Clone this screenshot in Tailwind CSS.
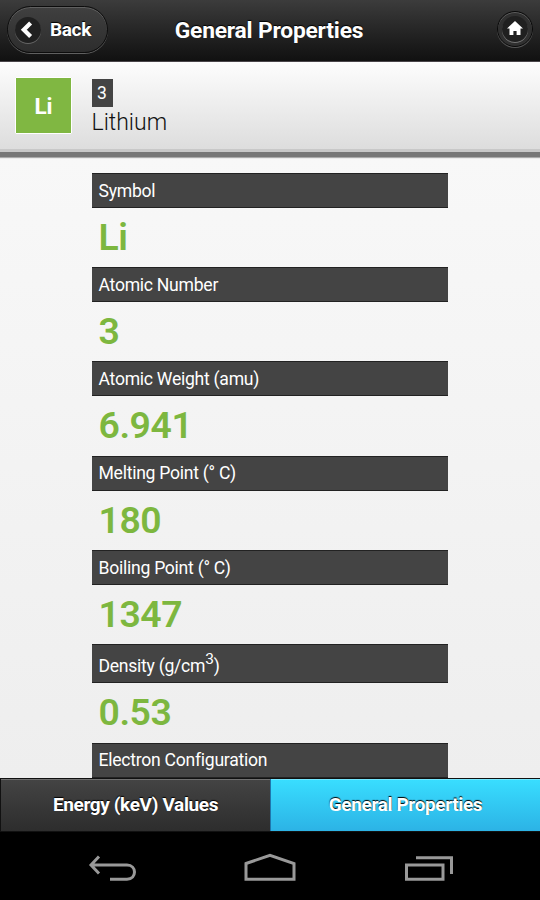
<!DOCTYPE html>
<html lang="en">
<head>
  <meta charset="UTF-8" />
  <meta name="viewport" content="width=device-width, initial-scale=1.0" />
  <title>General Properties | Lithium</title>
  <script src="https://cdn.jsdelivr.net/npm/@tailwindcss/browser@4"></script>
  <style>
    body {
      font-family: Roboto, sans-serif;
    }
  </style>
</head>
<body class="bg-black">
  <div class="w-[540px] h-[900px] flex flex-col overflow-hidden">

    <!-- Header -->
    <header class="h-[62px] shrink-0 grid grid-cols-[108px_1fr_108px] items-center px-[7px] pb-[2px] bg-linear-to-b from-[#3c3c3c] to-[#111111] border-b border-[#4a464a] text-white">
      <a href="#" class="w-[101px] h-[47px] rounded-full flex items-center pl-[7px] gap-[9px] bg-linear-to-b from-[#404040] to-[#2d2d2d] border border-[#0c0c0c] shadow-[inset_0_1px_0_#606060,0_1px_0_#606060]">
        <span class="w-[26px] h-[26px] rounded-full bg-[#202020] shadow-[0_1px_0_#656565] flex items-center justify-center">
          <svg class="w-[26px] h-[26px]" viewBox="0 0 26 26" fill="none" stroke="white" stroke-width="4.2">
            <path d="M15.6 6 L8.8 12.7 L15.6 19.4" />
          </svg>
        </span>
        <span class="pt-px text-[19px] tracking-[-0.35px] font-bold [text-shadow:0_-1px_1px_#000]">Back</span>
      </a>
      <h1 class="pt-[2px] text-center text-[22.8px] tracking-[-0.2px] mr-[2px] leading-7 font-bold whitespace-nowrap [text-shadow:0_-1px_1px_#000]">General Properties</h1>
      <a href="#" class="justify-self-end mt-[-1px] w-[36px] h-[36px] rounded-full flex items-center justify-center bg-[#303030] border border-[#090909] shadow-[inset_0_1px_0_#606060,0_1px_0_#555]">
        <span class="w-[26px] h-[26px] rounded-full bg-[#202020] shadow-[0_1px_0_#757575]">
          <svg class="w-[26px] h-[26px]" viewBox="0 0 26 26" fill="white">
            <path d="M13 5 L21 12.5 H18.5 V19 H14.6 V15 H11.4 V19 H7.5 V12.5 H5 Z" />
          </svg>
        </span>
      </a>
    </header>

    <!-- Element summary -->
    <section class="h-[95px] shrink-0 flex pt-[15px] pl-[15px] bg-linear-to-b from-[#fdfdfd] to-[#dcdcdc] border-b-[5px] border-[#777777] shadow-[inset_0_-3px_0_#c8c8c8,0_1px_1px_#aaa] relative">
      <div class="w-[57px] h-[57px] pt-[2px] bg-[#80b742] border border-white rounded-[1px] flex items-center justify-center text-[22.5px] font-bold text-white">Li</div>
      <div class="ml-[19.5px] pt-[2px]">
        <div class="w-[21px] h-[28px] bg-[#444444] text-white text-[17.5px] leading-[28px] text-center">3</div>
        <div class="text-[23px] leading-[32px] font-light text-[#111111]">Lithium</div>
      </div>
    </section>

    <!-- Properties -->
    <main class="flex-1 min-h-0 overflow-hidden bg-linear-to-b from-[#f8f8f8] to-[#eeeeee] pt-[16px]">
      <dl id="properties" class="w-[356px] ml-[92px]"></dl>
    </main>

    <!-- Tabs -->
    <nav class="h-[54px] shrink-0 grid grid-cols-2 border-y border-[#111111] text-white text-[19px] tracking-[-0.37px] font-bold">
      <a href="#" class="flex items-center justify-center border-l border-[#111111] bg-linear-to-b from-[#444444] to-[#2d2d2d] shadow-[inset_0_1px_0_#707070] [text-shadow:0_-1px_1px_#000]">Energy (keV) Values</a>
      <a href="#" class="flex items-center justify-center border-l border-[#1f76ad] bg-linear-to-b from-[#39deff] to-[#2cb3e5] shadow-[inset_0_1px_0_#74e8ff] [text-shadow:0_-1px_1px_#000]">General Properties</a>
    </nav>

    <!-- System navigation -->
    <footer class="h-[68px] shrink-0 bg-black">
      <svg class="w-[540px] h-[68px]" viewBox="0 832 540 68" fill="none" stroke="#999999" stroke-width="3">
        <path d="M91 865 H127 C137 865 137 879.2 127 879.2 H110 M99 856.5 L91 865 L99 873.5" />
        <path d="M246 863.5 L270 855.3 L294 863.5 V879.2 H246 Z" />
        <path d="M406.5 865 H443 V879.2 H406.5 Z M416 857.8 H451.5 V874" />
      </svg>
    </footer>
  </div>

  <script>
    const properties = [
      { label: "Symbol", value: "Li" },
      { label: "Atomic Number", value: "3" },
      { label: "Atomic Weight (amu)", value: "6.941" },
      { label: "Melting Point (° C)", value: "180" },
      { label: "Boiling Point (° C)", value: "1347" },
      { label: "Density (g/cm<sup class=\"text-[15.5px] top-[-7px]\">3</sup>)", value: "0.53", tall: true },
      { label: "Electron Configuration", value: "" }
    ];

    const list = document.getElementById('properties');
    properties.forEach(item => {
      const height = item.tall ? 'h-[39.5px] pt-[5px]' : 'h-[35px] pt-px';
      list.innerHTML += `
        <dt class="${height} flex items-center pl-[6.5px] bg-[#444444] border-y border-[#222222] text-[17.6px] tracking-[-0.27px] text-white"><span>${item.label}</span></dt>
        <dd class="h-[59.2px] pl-[6.5px] text-[37.4px] leading-[59.2px] tracking-[-0.45px] font-semibold text-[#7db73f]">${item.value}</dd>`;
    });
  </script>
</body>
</html>
